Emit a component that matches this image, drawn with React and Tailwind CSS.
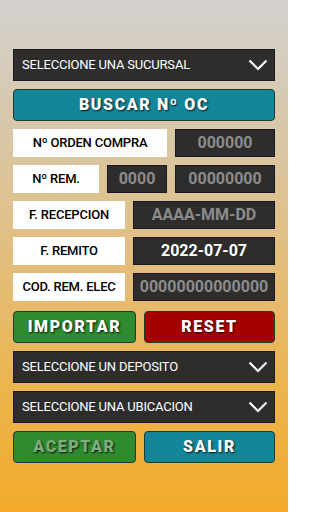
import React from "react";

function Chevron() {
  return (
    <svg width="20" height="12" viewBox="0 0 20 12" className="shrink-0">
      <path d="M1.5 1.5 L10 10 L18.5 1.5" fill="none" stroke="white" strokeWidth="2.2" />
    </svg>
  );
}

function Select({ label }) {
  return (
    <div className="h-[32px] bg-[#2e2d2c] border border-[#1c1c24] flex items-center justify-between pl-[8px] pr-[6px]">
      <span className="text-white text-[13px] tracking-[-0.2px]">{label}</span>
      <Chevron />
    </div>
  );
}

function Btn({ label, color, dim }) {
  return (
    <button
      className={`h-[32px] rounded-[4px] border border-[#1f3a30] flex items-center justify-center font-black text-[16px] tracking-[1.6px] [text-shadow:1px_1px_2px_rgba(0,0,0,0.85)] ${color} ${dim ? "text-[#7fae7c]" : "text-white"}`}
    >
      {label}
    </button>
  );
}

function Label({ w, children }) {
  return (
    <div className={`${w} h-[28px] bg-white flex items-center justify-center text-black font-medium text-[13px] tracking-[-0.2px]`}>
      {children}
    </div>
  );
}

function Box({ w, children, bright }) {
  return (
    <div
      className={`${w} h-[28px] bg-[#2e2d2c] border border-[#181826] flex items-center justify-center font-bold text-[16px] ${bright ? "text-white" : "text-[#8c8c8c]"}`}
    >
      {children}
    </div>
  );
}

export default function App() {
  return (
    <div
      className="w-[288px] h-[512px] bg-[linear-gradient(180deg,#d3d1ce_0%,#d8c7a9_25%,#e2be7e_50%,#ebb54f_75%,#f3aa2a_100%)] px-[13px] pt-[49px]"
      style={{ fontFamily: "Roboto, 'Liberation Sans', sans-serif" }}
    >
      <div className="flex flex-col gap-[8px]">
        <Select label="SELECCIONE UNA SUCURSAL" />
        <Btn label="BUSCAR Nº OC" color="bg-[#14869a]" />
        <div className="flex gap-[8px]">
          <Label w="w-[154px]">Nº ORDEN COMPRA</Label>
          <Box w="flex-1">000000</Box>
        </div>
        <div className="flex gap-[8px]">
          <Label w="w-[86px]">Nº REM.</Label>
          <Box w="w-[60px]">0000</Box>
          <Box w="flex-1">00000000</Box>
        </div>
        <div className="flex gap-[8px]">
          <Label w="w-[112px]">F. RECEPCION</Label>
          <Box w="flex-1">AAAA-MM-DD</Box>
        </div>
        <div className="flex gap-[8px]">
          <Label w="w-[112px]">F. REMITO</Label>
          <Box w="flex-1" bright>2022-07-07</Box>
        </div>
        <div className="flex gap-[8px]">
          <Label w="w-[112px]">COD. REM. ELEC</Label>
          <Box w="flex-1">00000000000000</Box>
        </div>
      </div>
      <div className="flex flex-col gap-[8px] mt-[10px]">
        <div className="grid grid-cols-[123px_1fr] gap-[8px]">
          <Btn label="IMPORTAR" color="bg-[#2e8b2f]" />
          <Btn label="RESET" color="bg-[#a80000]" />
        </div>
        <Select label="SELECCIONE UN DEPOSITO" />
        <Select label="SELECCIONE UNA UBICACION" />
        <div className="grid grid-cols-[123px_1fr] gap-[8px]">
          <Btn label="ACEPTAR" color="bg-[#2e8b2f]" dim />
          <Btn label="SALIR" color="bg-[#14869a]" />
        </div>
      </div>
    </div>
  );
}
